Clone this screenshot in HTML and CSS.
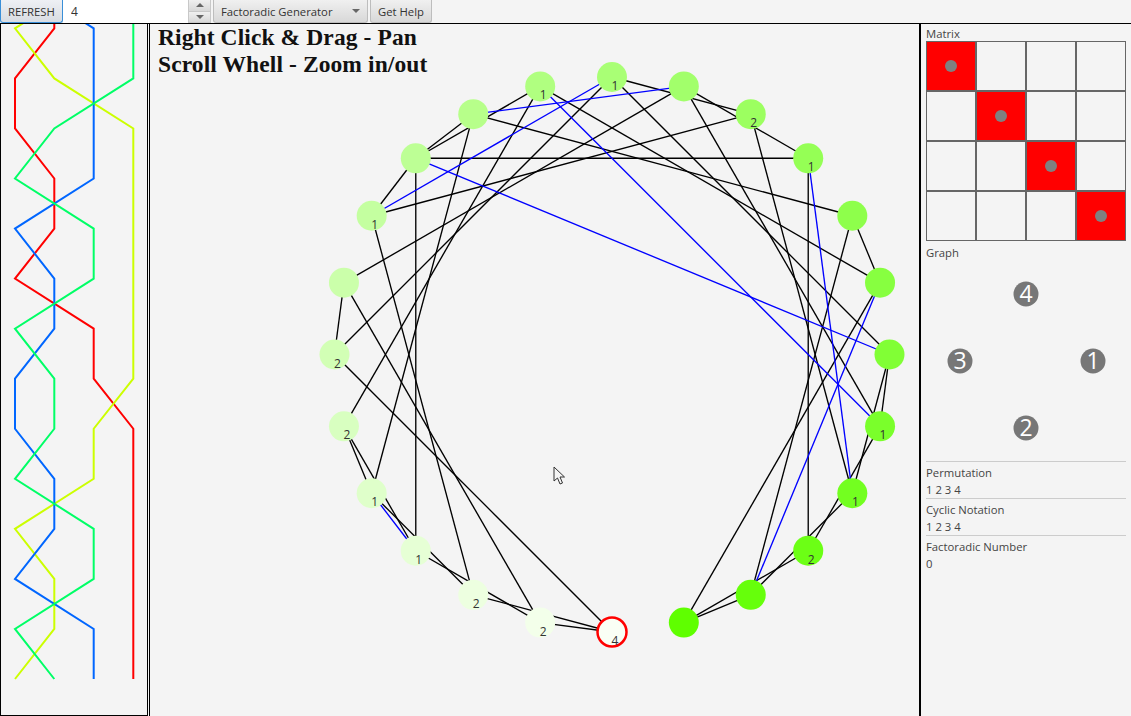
FILE: index.html
```html
<!DOCTYPE html>
<html lang="en">
<head>
  <meta charset="UTF-8" />
  <title>Factoradic Generator</title>
  <link rel="stylesheet" href="styles.css">
</head>
<body>
  <div class="toolbar">
    <button class="btn btn-refresh">REFRESH</button>
    <input class="size-input" type="text" value="4">
    <div class="spinner">
      <span class="spin-btn"><i class="arrow-up"></i></span>
      <span class="spin-btn"><i class="arrow-down"></i></span>
    </div>
    <div class="btn combo">
      <span>Factoradic Generator</span>
      <i class="arrow-down"></i>
    </div>
    <button class="btn">Get Help</button>
  </div>

  <div class="main">
    <div class="braid-panel">
      <svg id="braid" width="146" height="691"></svg>
    </div>

    <div class="graph-panel">
      <h1 class="hint">Right Click &amp; Drag - Pan<br>Scroll Whell - Zoom in/out</h1>
      <svg id="graph" class="graph" width="769" height="691"></svg>
      <svg class="cursor" width="14" height="20" viewBox="0 0 14 20">
        <path d="M1 1 L1 15 L4.5 12 L7 18 L9.5 17 L7 11 L11.5 11 Z" fill="#f4f4f4" stroke="#333" stroke-width="1"/>
      </svg>
    </div>

    <div class="side-panel">
      <div class="label">Matrix</div>
      <div class="matrix" id="matrix"></div>
      <div class="label graph-label">Graph</div>
      <svg class="mini-graph" width="200" height="201">
        <circle cx="100" cy="34" r="12.5"/><text x="100" y="42">4</text>
        <circle cx="34" cy="101" r="12.5"/><text x="34" y="109">3</text>
        <circle cx="167" cy="101" r="12.5"/><text x="167" y="109">1</text>
        <circle cx="100" cy="168" r="12.5"/><text x="100" y="176">2</text>
      </svg>
      <div class="info">
        <div class="label">Permutation</div>
        <div class="label">1 2 3 4</div>
      </div>
      <div class="info">
        <div class="label">Cyclic Notation</div>
        <div class="label">1 2 3 4</div>
      </div>
      <div class="info">
        <div class="label">Factoradic Number</div>
        <div class="label">0</div>
      </div>
    </div>
  </div>

  <script>
    const NS = 'http://www.w3.org/2000/svg';

    function add(parent, name, attrs) {
      const el = document.createElementNS(NS, name);
      Object.keys(attrs).forEach(k => el.setAttribute(k, attrs[k]));
      parent.appendChild(el);
      return el;
    }

    // Braid wires, one column letter for every row
    const cols = { A: 14, B: 53.3, C: 92.7, D: 132.3 };
    const wires = [
      { cls: 'wire-red',    path: 'BBAABBACCDDDDDD' },
      { cls: 'wire-yellow', path: 'CABDDDDDDCCABBA' },
      { cls: 'wire-blue',   path: 'ACCCCABBAABBACC' },
      { cls: 'wire-green',  path: 'DDDBACCABBACCAB' }
    ];
    const braid = document.getElementById('braid');
    wires.forEach(w => {
      const pts = w.path.split('').map((c, i) => cols[c] + ',' + (i * 50.05 - 45.7));
      add(braid, 'polyline', { points: pts.join(' '), class: w.cls });
    });

    // Graph nodes sit on a circle, node 0 at the bottom
    const labels = { 0: 4, 1: 2, 2: 2, 3: 1, 4: 1, 5: 2, 6: 2, 8: 1, 11: 1, 12: 1, 14: 2, 15: 1, 19: 1, 20: 1, 21: 2 };
    const edges = [
      [0,1],[0,2],[0,6],[1,3],[1,7],[2,4],[2,8],[3,5],[3,9],[4,5],[4,10],[5,11],
      [6,7],[6,12],[7,13],[8,9],[8,14],[9,10],[9,11],[9,15],[10,16],[11,17],
      [12,14],[12,18],[13,15],[13,19],[14,20],[15,21],[16,17],[16,22],[17,23],
      [18,19],[18,20],[19,21],[20,22],[21,23],[22,23]
    ];
    const blueEdges = [[3,4],[8,12],[9,18],[10,13],[11,19],[15,20],[17,22]];

    const graph = document.getElementById('graph');
    const cx = 612 - 150, cy = 354.5 - 24, r = 277.5;
    const nodes = [];
    for (let i = 0; i < 24; i++) {
      const a = i * Math.PI / 12;
      nodes.push({ x: cx - r * Math.sin(a), y: cy + r * Math.cos(a) });
    }
    function drawEdges(list, cls) {
      list.forEach(e => add(graph, 'line', {
        x1: nodes[e[0]].x, y1: nodes[e[0]].y, x2: nodes[e[1]].x, y2: nodes[e[1]].y, class: cls
      }));
    }
    drawEdges(edges, 'edge');
    drawEdges(blueEdges, 'edge edge-blue');

    nodes.forEach((n, i) => {
      const t = i / 23;
      const fill = 'rgb(' + Math.round(250 - 155 * t) + ',255,' + Math.round(245 * (1 - t)) + ')';
      const circle = add(graph, 'circle', { cx: n.x, cy: n.y, r: i === 0 ? 14.5 : 15, fill: fill });
      if (i === 0) circle.setAttribute('class', 'node-start');
      if (labels[i]) {
        const text = add(graph, 'text', { x: n.x + 3, y: n.y + 13, class: 'node-label' });
        text.textContent = labels[i];
      }
    });

    // 4x4 matrix, identity permutation
    const matrix = document.getElementById('matrix');
    for (let i = 0; i < 16; i++) {
      const cell = document.createElement('div');
      cell.className = i % 5 === 0 ? 'cell cell-on' : 'cell';
      matrix.appendChild(cell);
    }
  </script>
</body>
</html>
```
FILE: styles.css
```css
/* Page */
* {
  box-sizing: border-box;
}
html, body {
  margin: 0;
  height: 100%;
  overflow: hidden;
}
body {
  font-family: "Open Sans", "Noto Sans", sans-serif;
  font-size: 11.3px;
  color: #333;
  background-color: #f4f4f4;
}

/* Toolbar */
.toolbar {
  display: flex;
  height: 23px;
  align-items: stretch;
}
.btn {
  display: flex;
  align-items: center;
  font-family: inherit;
  font-size: 11.3px;
  color: #333;
  padding: 0 7px;
  margin-right: 2px;
  border: 1px solid #bdbdbd;
  border-top: 0;
  border-radius: 0 0 3px 3px;
  background: linear-gradient(#f0f0f0, #d8d8d8);
}
.btn-refresh {
  width: 63px;
  margin-right: 0;
  padding: 0 7px;
  border: 1px solid #3a8fd8;
  border-top: 0;
  background: linear-gradient(#eef0f4, #d8dce2);
}
.size-input {
  width: 125px;
  border: 0;
  padding: 0 8px;
  font-family: inherit;
  font-size: 12px;
  color: #333;
  background-color: #fff;
  outline: none;
}
.spinner {
  width: 23px;
  margin-right: 2px;
  display: flex;
  flex-direction: column;
}
.spin-btn {
  flex: 1;
  display: flex;
  align-items: center;
  justify-content: center;
  border: 1px solid #c8c8c8;
  border-top: 0;
  background: linear-gradient(#f0f0f0, #d8d8d8);
}
.combo {
  width: 155px;
  justify-content: space-between;
}
.arrow-up, .arrow-down {
  display: block;
  width: 0;
  height: 0;
  border-left: 4px solid transparent;
  border-right: 4px solid transparent;
}
.arrow-up {
  border-bottom: 4px solid #666;
}
.arrow-down {
  border-top: 4px solid #666;
}

/* Three columns under the toolbar */
.main {
  display: flex;
  height: 693px;
  border-top: 1px solid #000;
}
.braid-panel {
  width: 148px;
  height: 692px;
  border-left: 1px solid #000;
  border-right: 1px solid #000;
  border-bottom: 1px solid #000;
  overflow: hidden;
}
.braid-panel svg {
  display: block;
}
.wire-red, .wire-yellow, .wire-blue, .wire-green {
  fill: none;
  stroke-width: 2;
}
.wire-red { stroke: #ff0000; }
.wire-yellow { stroke: #ccff00; }
.wire-blue { stroke: #0066ff; }
.wire-green { stroke: #00ff66; }

.graph-panel {
  position: relative;
  width: 772px;
  margin-left: 1px;
  border-left: 1px solid #000;
  border-right: 2px solid #000;
  overflow: hidden;
}
.hint {
  position: absolute;
  top: 0;
  left: 8px;
  margin: 0;
  font-family: "Liberation Serif", serif;
  font-size: 23.5px;
  letter-spacing: 0.1px;
  line-height: 27px;
  font-weight: bold;
  color: #111;
  white-space: nowrap;
}
.graph {
  display: block;
}
.edge {
  stroke: #000;
  stroke-width: 1.35;
}
.edge-blue {
  stroke: #0000ff;
}
.node-start {
  stroke: #ff0000;
  stroke-width: 2.5;
}
.node-label {
  font-size: 12px;
  fill: #333;
  text-anchor: middle;
}
.cursor {
  position: absolute;
  left: 403px;
  top: 442px;
}

/* Right column */
.side-panel {
  flex: 1;
  padding: 2px 5px 0 5px;
}
.label {
  height: 15px;
  line-height: 15px;
  color: #444;
}
.matrix {
  display: grid;
  grid-template-columns: repeat(4, 50px);
  grid-template-rows: repeat(4, 50px);
  width: 200px;
  height: 200px;
}
.cell {
  border: 0.75px solid #666;
}
.cell-on {
  display: flex;
  align-items: center;
  justify-content: center;
  background-color: #ff0000;
}
.cell-on::after {
  content: "";
  width: 12px;
  height: 12px;
  border-radius: 50%;
  background-color: #808080;
}
.graph-label {
  margin-top: 4px;
}
.mini-graph {
  display: block;
}
.mini-graph circle {
  fill: #777;
}
.mini-graph text {
  font-size: 23px;
  fill: #fff;
  text-anchor: middle;
}
.info {
  height: 37px;
  padding-top: 2px;
  border-top: 1px solid #ccc;
}
.info .label {
  height: 17px;
  line-height: 17px;
}
```
